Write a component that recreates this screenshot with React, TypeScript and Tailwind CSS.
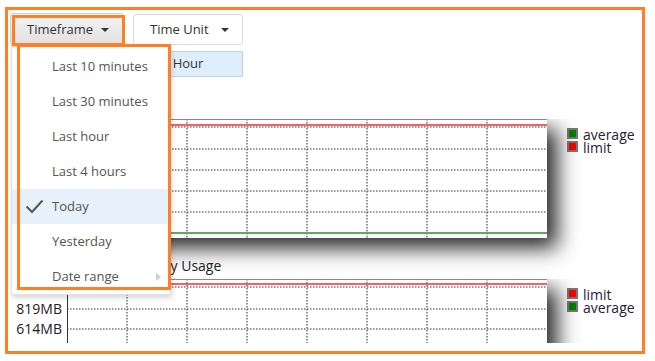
import React from "react";

const Caret = () => (
  <svg width="8" height="4" viewBox="0 0 8 4" className="block">
    <polygon points="0,0 8,0 4,4" fill="#333" />
  </svg>
);

const dot = { stroke: "#777", strokeWidth: 1.6, strokeDasharray: "1.5 1.5" };

function Plot({
  redY,
  hLines,
  greenY,
  height,
}: {
  redY: number;
  hLines: number[];
  greenY?: number;
  height: number;
}) {
  const vLines = [60, 120, 180, 240, 300, 360, 420];
  return (
    <div className="w-[480px] bg-white shadow-[10px_10px_20px_rgba(0,0,0,0.85)] [clip-path:inset(0_-60px_-60px_0)]" style={{ height }}>
      <svg width="480" height={height} className="block">
        {hLines.map((y) => (
          <line key={"h" + y} x1="0" x2="480" y1={y} y2={y} {...dot} />
        ))}
        {vLines.map((x) => (
          <line key={"v" + x} x1={x} x2={x} y1="0" y2={height} {...dot} />
        ))}
        <line x1="0" x2="480" y1="0.5" y2="0.5" stroke="#8a8a8a" strokeWidth="1" />
        <line x1="0" x2="480" y1={redY} y2={redY} stroke="#f06565" strokeWidth="2" />
        {greenY !== undefined && (
          <line x1="0" x2="480" y1={greenY} y2={greenY} stroke="#62a862" strokeWidth="2" />
        )}
        <line x1="0.5" x2="0.5" y1="0" y2={height} stroke="#333" strokeWidth="1" />
      </svg>
    </div>
  );
}

function Legend({ items }: { items: { label: string; color: string }[] }) {
  return (
    <div className="ml-[20px] mt-[9px] flex flex-col">
      {items.map((it) => (
        <div key={it.label} className="flex h-[13px] items-start">
          <div className="h-[11px] w-[11px] border-2 border-[#7a7a7a]" style={{ background: it.color }} />
          <span className="ml-[5px] text-[14px] leading-[13px] text-[#1e2233]">{it.label}</span>
        </div>
      ))}
    </div>
  );
}

const menuItems = [
  "Last 10 minutes",
  "Last 30 minutes",
  "Last hour",
  "Last 4 hours",
  "Today",
  "Yesterday",
  "Date range",
];

export default function App() {
  return (
    <div className="h-[361px] w-[655px] overflow-hidden bg-white pl-[5px] pt-[7px] font-['Open_Sans',sans-serif]">
      <div className="relative h-[347px] w-[640px] border-[3px] border-[#ff7f27]">
        <div className="h-[333px] overflow-hidden pl-[2px] pt-[3px]">
          {/* toolbar */}
          <div className="flex items-start gap-[9px]">
            <div className="flex h-[33px] w-[114px] items-center justify-between rounded-[3px] border border-[#cfcfcf] bg-gradient-to-b from-[#f3f3f3] to-[#e1e1e1] pl-[16px] pr-[14px] text-[13px] text-[#333]">
              <span>Timeframe</span>
              <Caret />
            </div>
            <div className="mt-[1px] flex h-[31px] w-[110px] items-center justify-between rounded-[3px] border border-[#dcdcdc] bg-white pl-[16px] pr-[13px] text-[13px] text-[#333]">
              <span>Time Unit</span>
              <Caret />
            </div>
          </div>
          <div className="ml-[123px] mt-[5px] flex h-[26px] w-[110px] items-center justify-center border border-[#b9d3e8] bg-[#deeefb] text-[13px] text-[#333]">
            Hour
          </div>

          {/* chart 1 */}
          <div className="mt-[42px] flex items-start">
            <div className="h-[119px] w-[57px]" />
            <Plot height={119} redY={6} hLines={[8, 30, 51, 72, 93]} greenY={114} />
            <Legend items={[{ label: "average", color: "#008000" }, { label: "limit", color: "#ff0000" }]} />
          </div>

          {/* chart 2 */}
          <div className="ml-[113px] mt-[18px] h-[20px] text-[14px] leading-[20px] text-[#222]">Memory Usage</div>
          <div className="mt-[3px] flex items-start">
            <div className="relative h-[64px] w-[57px] text-[14px] text-[#222]">
              {[
                ["819MB", 30],
                ["614MB", 50],
              ].map(([l, y]) => (
                <span key={l as string} className="absolute right-[5px] leading-[16px]" style={{ top: (y as number) - 8 }}>
                  {l}
                </span>
              ))}
            </div>
            <Plot height={119} redY={5} hLines={[8, 30, 50, 71, 92, 113]} />
            <Legend items={[{ label: "limit", color: "#ff0000" }, { label: "average", color: "#008000" }]} />
          </div>
        </div>

        {/* dropdown menu */}
        <div className="absolute left-[3px] top-[36px] w-[160px] border border-[#e2e2e2] bg-white pt-[2px] shadow-[1px_3px_5px_rgba(0,0,0,0.15)]">
          {menuItems.map((m) => (
            <div
              key={m}
              className={
                "relative flex h-[35px] items-center pl-[40px] text-[13px] text-[#555] " +
                (m === "Today" ? "bg-[#e7f1fc]" : "")
              }
            >
              {m === "Today" && (
                <svg width="19" height="15" viewBox="0 0 19 15" className="absolute left-[13px] top-[10px]">
                  <path d="M1.5 7.5 L7 13 L17.5 1.5" fill="none" stroke="#555" strokeWidth="2" />
                </svg>
              )}
              {m}
              {m === "Date range" && (
                <svg width="5" height="8" viewBox="0 0 5 8" className="absolute right-[9px] top-[14px]">
                  <polygon points="0,0 5,4 0,8" fill="#cfcfcf" />
                </svg>
              )}
            </div>
          ))}
        </div>

        {/* orange highlight boxes */}
        <div className="pointer-events-none absolute left-[4px] top-[5px] h-[31px] w-[113px] border-[3px] border-[#ff7f27]" />
        <div className="pointer-events-none absolute left-[9px] top-[34px] h-[246px] w-[154px] border-[3px] border-[#ff7f27]" />
      </div>
    </div>
  );
}
